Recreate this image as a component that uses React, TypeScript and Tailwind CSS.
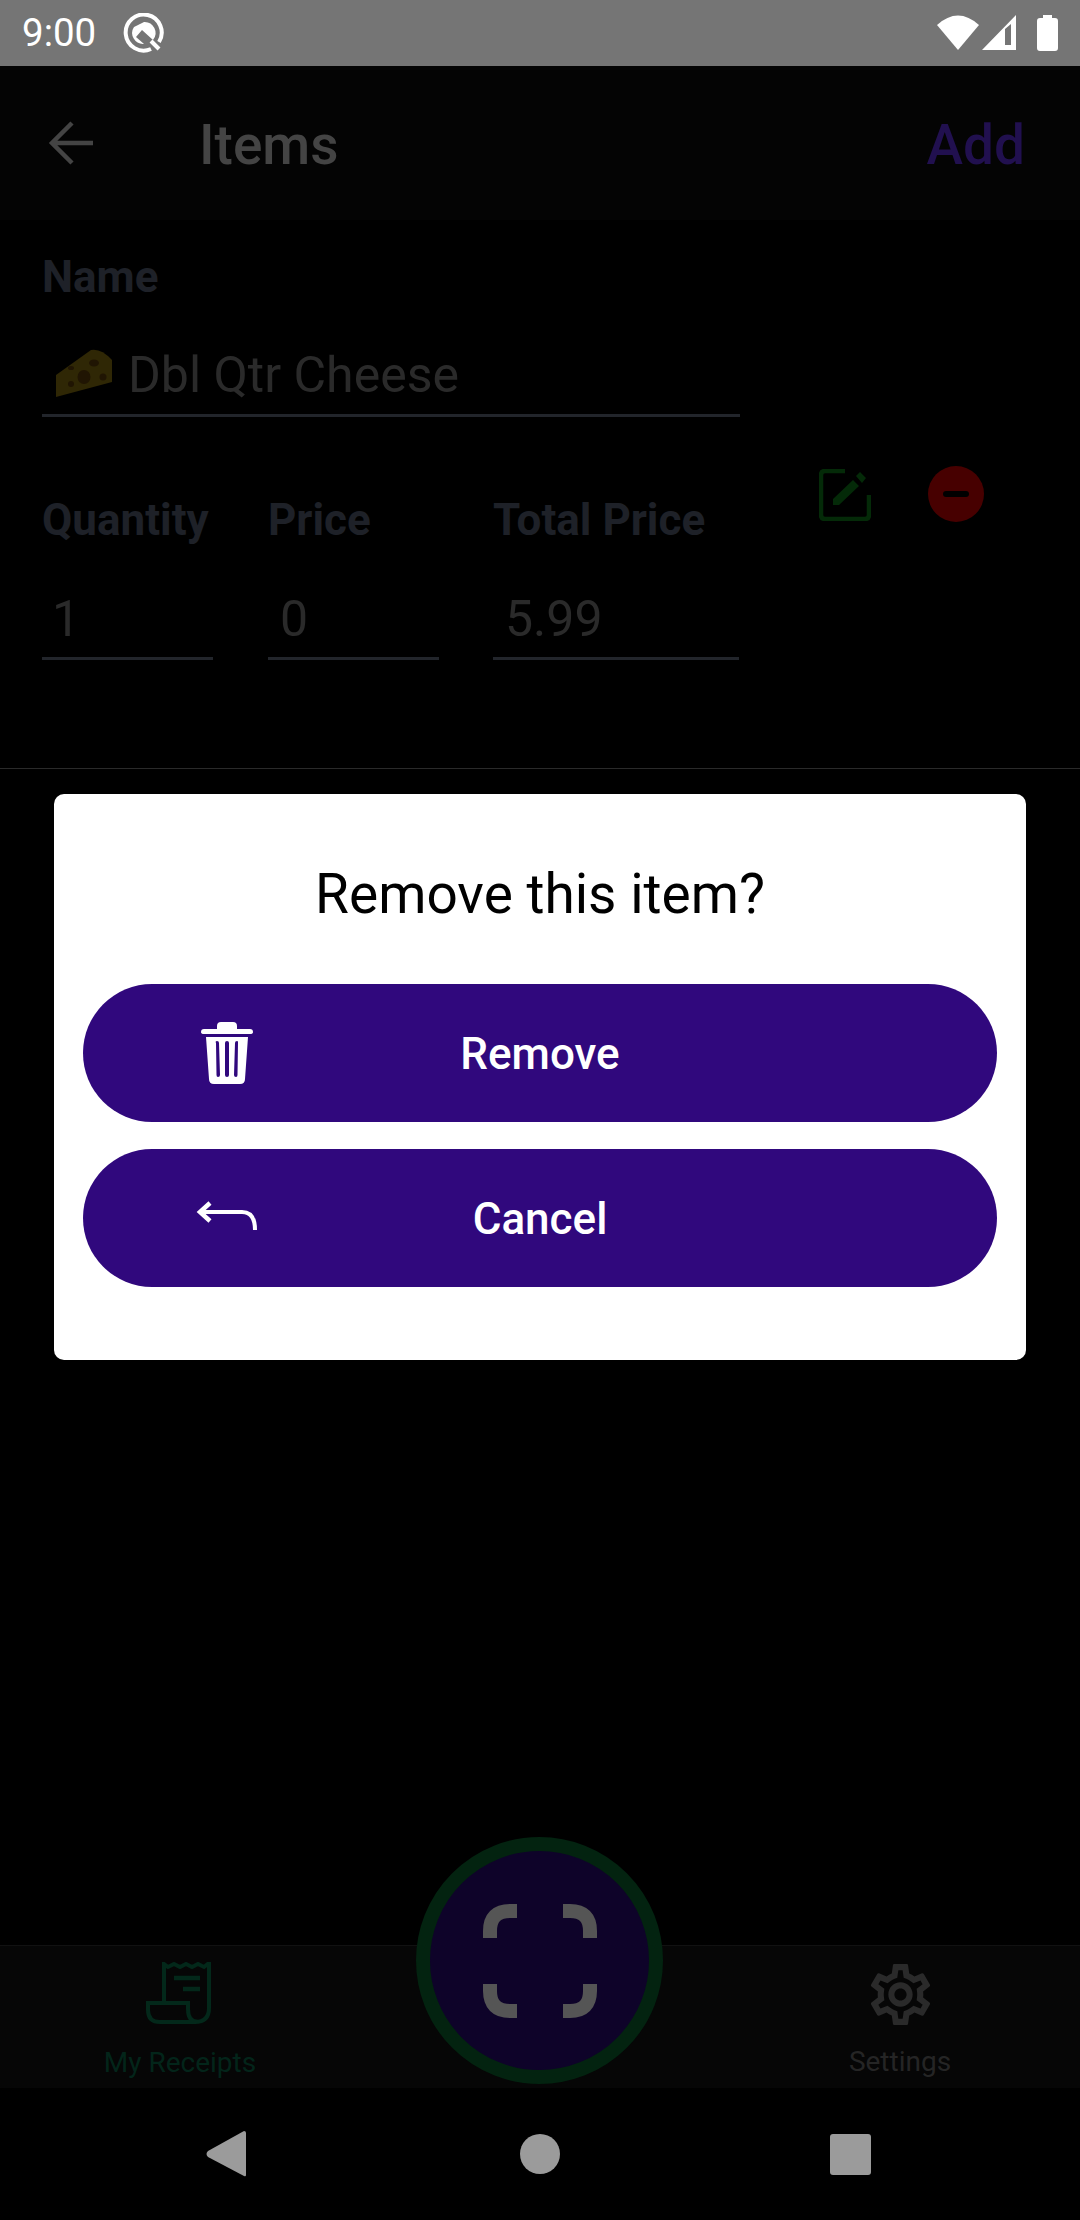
import React from "react";

const GEAR =
  "M19.43 12.98c.04-.32.07-.64.07-.98 0-.34-.03-.66-.07-.98l2.11-1.65c.19-.15.24-.42.12-.64l-2-3.46c-.09-.16-.26-.25-.44-.25-.06 0-.12.01-.17.03l-2.49 1c-.52-.4-1.08-.73-1.69-.98l-.38-2.65C14.46 2.18 14.25 2 14 2h-4c-.25 0-.46.18-.49.42l-.38 2.65c-.61.25-1.17.59-1.69.98l-2.49-1c-.06-.02-.12-.03-.18-.03-.17 0-.34.09-.43.25l-2 3.46c-.13.22-.07.49.12.64l2.11 1.65c-.04.32-.07.65-.07.98 0 .33.03.66.07.98l-2.11 1.65c-.19.15-.24.42-.12.64l2 3.46c.09.16.26.25.44.25.06 0 .12-.01.17-.03l2.49-1c.52.4 1.08.73 1.69.98l.38 2.65c.03.24.24.42.49.42h4c.25 0 .46-.18.49-.42l.38-2.65c.61-.25 1.17-.59 1.69-.98l2.49 1c.06.02.12.03.18.03.17 0 .34-.09.43-.25l2-3.46c.12-.22.07-.49-.12-.64l-2.11-1.65zm-1.98-1.71c.04.31.05.52.05.73 0 .21-.02.43-.05.73l-.14 1.13.89.7 1.08.84-.7 1.21-1.27-.51-1.04-.42-.9.68c-.43.32-.84.56-1.25.73l-1.06.43-.16 1.13-.2 1.35h-1.4l-.19-1.35-.16-1.13-1.06-.43c-.43-.18-.83-.41-1.23-.71l-.91-.7-1.06.43-1.27.51-.7-1.21 1.08-.84.89-.7-.14-1.13c-.03-.31-.05-.54-.05-.74s.02-.43.05-.73l.14-1.13-.89-.7-1.08-.84.7-1.21 1.27.51 1.04.42.9-.68c.43-.32.84-.56 1.25-.73l1.06-.43.16-1.13.2-1.35h1.39l.19 1.35.16 1.13 1.06.43c.43.18.83.41 1.23.71l.91.7 1.06-.43 1.27-.51.7 1.21-1.07.85-.89.7.14 1.13zM12 8c-2.21 0-4 1.79-4 4s1.79 4 4 4 4-1.79 4-4-1.79-4-4-4zm0 6c-1.1 0-2-.9-2-2s.9-2 2-2 2 .9 2 2-.9 2-2 2z";

function Field({ label, value, w, pad }: { label: string; value: string; w: string; pad: string }) {
  return (
    <div className={`flex flex-col ${w}`}>
      <div className="h-[46px] -mt-[3px] text-[44px] leading-[46px] font-bold text-[#1e2128] whitespace-nowrap">{label}</div>
      <div className={`mt-[46px] h-[60px] text-[50px] leading-[60px] text-[#2a2a2a] ${pad}`}>{value}</div>
      <div className="mt-[8px] h-[3px] bg-[#22252b]" />
    </div>
  );
}

function ModalButton({ label, children }: { label: string; children: React.ReactNode }) {
  return (
    <div className="relative h-[138px] w-full rounded-[69px] bg-[#30087d] flex items-center justify-center">
      <div className="absolute left-[84px] top-0 h-full w-[120px] flex items-center justify-center">{children}</div>
      <span className="mt-[2px] text-[44px] font-medium text-white">{label}</span>
    </div>
  );
}

export default function App() {
  return (
    <div className="relative w-[1080px] h-[2220px] overflow-hidden bg-black flex flex-col font-[Roboto,sans-serif]">
      {/* status bar */}
      <div className="h-[66px] bg-[#757575] flex items-center text-white shrink-0">
        <span className="ml-[22px] text-[38.5px] leading-[66px]">9:00</span>
        <svg className="ml-[27px]" width="42" height="40" viewBox="0 0 42 40" fill="none">
          <path d="M28 36 A18 18 0 1 1 36 29" stroke="white" strokeWidth="4" />
          <path d="M28 28 L36 36" stroke="white" strokeWidth="4" />
          <path d="M21 9 A11 11 0 0 1 30 27 L19 17 L13 24 L21 31 A11 11 0 0 1 11 14 Z" fill="white" />
        </svg>
        <div className="flex-1" />
        <svg width="42" height="36" viewBox="0 0 42 36"><path d="M0 10 Q21 -9 42 10 L21 35 Z" fill="white" /></svg>
        <svg className="ml-[3px]" width="35" height="36" viewBox="0 0 35 36">
          <path fillRule="evenodd" d="M0 35 L34 0 V35 Z M23 14 V30 H29 V9 Z" fill="white" />
        </svg>
        <svg className="ml-[20px] mr-[22px]" width="21" height="36" viewBox="0 0 21 36">
          <path d="M6 0 H15 V3 H18 Q21 3 21 6 V33 Q21 36 18 36 H3 Q0 36 0 33 V6 Q0 3 3 3 H6 Z" fill="white" />
        </svg>
      </div>

      {/* header */}
      <div className="h-[154px] bg-[#040404] flex items-center shrink-0">
        <svg className="ml-[48px]" width="46" height="46" viewBox="0 0 46 46" fill="none" stroke="#444444" strokeWidth="4.5">
          <path d="M45 23 H5 M24 3 L4 23 L24 43" />
        </svg>
        <span className="ml-[105px] mt-[5px] text-[55px] font-medium text-[#444444] leading-none">Items</span>
        <div className="flex-1" />
        <span className="mr-[55px] mt-[5px] text-[55px] font-medium text-[#21104f] leading-none">Add</span>
      </div>

      {/* form */}
      <div className="flex-1 flex flex-col">
        <div className="flex pl-[42px] h-[549px] border-b border-[#2a2a2a]">
          <div className="w-[698px] flex flex-col">
            <div className="mt-[34px] h-[46px] text-[44px] leading-[46px] font-bold text-[#1e2128]">Name</div>
            <div className="mt-[41px] h-[68px] flex items-center text-[50px] text-[#2a2a2a]">
              <svg className="ml-[13px] -mt-[4px]" width="58" height="50" viewBox="0 0 58 50">
                <path d="M1 27 L36 2 Q46 0 57 12 V34 L1 49 Z" fill="#2f2705" />
                <ellipse cx="29" cy="29" rx="6.5" ry="7" fill="#201503" />
                <ellipse cx="39" cy="15" rx="5" ry="3.5" fill="#201503" />
                <ellipse cx="48" cy="29" rx="3.5" ry="3.5" fill="#201503" />
                <ellipse cx="16" cy="20" rx="3" ry="2" fill="#201503" />
                <ellipse cx="16" cy="36" rx="3" ry="3" fill="#201503" />
              </svg>
              <span className="ml-[15px]">Dbl Qtr Cheese</span>
            </div>
            <div className="mt-[5px] h-[3px] bg-[#22252b]" />
            <div className="mt-[83px] flex">
              <Field label="Quantity" value="1" w="w-[171px]" pad="pl-[10px]" />
              <div className="w-[55px]" />
              <Field label="Price" value="0" w="w-[171px]" pad="pl-[12px]" />
              <div className="w-[54px]" />
              <Field label="Total Price" value="5.99" w="w-[246px]" pad="pl-[12px]" />
            </div>
          </div>
          <div className="ml-[79px] mt-[249px] h-[52px] flex items-start">
            <svg width="52" height="52" viewBox="0 0 52 52" fill="none">
              <path d="M26 2 H6 Q2 2 2 6 V46 Q2 50 6 50 H46 Q50 50 50 46 V26" stroke="#042a08" strokeWidth="4.5" />
              <path d="M14 36 V30 L34 11 L40 17 L20 36 Z M37 7 L41 3 L47 9 L43 14 Z" fill="#042a08" />
            </svg>
            <svg className="ml-[57px] -mt-[3px]" width="56" height="56" viewBox="0 0 56 56">
              <circle cx="28" cy="28" r="28" fill="#470000" />
              <rect x="15" y="25" width="26" height="6" rx="3" fill="#000000" />
            </svg>
          </div>
        </div>
        <div className="flex-1" />

        {/* tab bar */}
        <div className="h-[143px] bg-[#060606] border-t border-[#111111] flex">
          <div className="w-[360px] flex flex-col items-center">
            <svg className="mt-[16px] -ml-[3px]" width="66" height="62" viewBox="0 0 66 62" fill="none" stroke="#03281a" strokeWidth="4">
              <path d="M18 40 V2 L22 5 L28 2 L34 5 L40 2 L46 5 L52 2 L58 5 L63 1 V46 Q63 60 49 60 H14 Q2 60 2 48 V41 H42 V47 Q42 60 52 60" />
              <path d="M28 16 H54 M37 27 H54" strokeWidth="4.5" />
            </svg>
            <span className="mt-[23px] text-[28px] leading-[32px] text-[#03251a]">My Receipts</span>
          </div>
          <div className="flex-1" />
          <div className="w-[360px] flex flex-col items-center">
            <svg className="mt-[12px]" width="73" height="73" viewBox="0 0 24 24"><path d={GEAR} fill="#2a2a2a" /></svg>
            <span className="mt-[15px] text-[28px] leading-[32px] text-[#252525]">Settings</span>
          </div>
        </div>

        {/* system nav */}
        <div className="h-[132px] flex items-center">
          <svg className="ml-[206px]" width="40" height="46" viewBox="0 0 40 46"><path d="M38 0 Q40 0 40 2 V44 Q40 46 38 45 L2 26 Q-1 23 2 20 Z" fill="#9b9b9b" /></svg>
          <div className="ml-[274px] w-[40px] h-[40px] rounded-full bg-[#9b9b9b]" />
          <div className="ml-[270px] w-[41px] h-[41px] rounded-[3px] bg-[#9b9b9b]" />
        </div>
      </div>

      {/* scan button */}
      <div className="absolute left-[416px] top-[1837px] w-[247px] h-[247px] rounded-full border-[14px] border-[#032310] bg-[#0e0329] flex items-center justify-center">
        <svg width="114" height="114" viewBox="0 0 114 114" fill="none" stroke="#555555" strokeWidth="14">
          <path d="M34 7 H27 Q7 7 7 27 V34" />
          <path d="M80 7 H87 Q107 7 107 27 V34" />
          <path d="M34 107 H27 Q7 107 7 87 V80" />
          <path d="M80 107 H87 Q107 107 107 87 V80" />
        </svg>
      </div>

      {/* modal */}
      <div className="absolute left-[54px] top-[794px] w-[972px] h-[566px] rounded-[10px] bg-white flex flex-col px-[29px]">
        <div className="mt-[69px] h-[62px] text-center text-[55px] leading-[62px] text-black">Remove this item?</div>
        <div className="mt-[59px] flex flex-col gap-[27px]">
          <ModalButton label="Remove">
            <svg width="52" height="62" viewBox="0 0 52 62">
              <path fillRule="evenodd" fill="white" d="M16 4 Q16 0 20 0 H32 Q36 0 36 4 V7 H49 Q52 7 52 10 Q52 12 49 12 H3 Q0 12 0 10 Q0 7 3 7 H16 Z M5 15 H47 L44 57 Q44 62 39 62 H13 Q8 62 8 57 Z M15 21 Q14 19 16 19 Q18 19 18 21 L19 53 Q19 55 17 55 Q15.500 55 15.500 53 Z M24 21 Q24 19 26 19 Q28 19 28 21 V53 Q28 55 26 55 Q24 55 24 53 Z M34 21 Q34 19 36 19 Q37.500 19 37 21 L36.500 53 Q36.500 55 35 55 Q33 55 33 53 Z" />
            </svg>
          </ModalButton>
          <ModalButton label="Cancel">
            <svg className="-mt-[4px]" width="62" height="30" viewBox="0 0 62 30" fill="none" stroke="white" strokeWidth="4">
              <path d="M3 11 H46 Q59 11 59 29" />
              <path d="M14 2 L4 11 L14 20" strokeWidth="4.500" />
            </svg>
          </ModalButton>
        </div>
      </div>
    </div>
  );
}
